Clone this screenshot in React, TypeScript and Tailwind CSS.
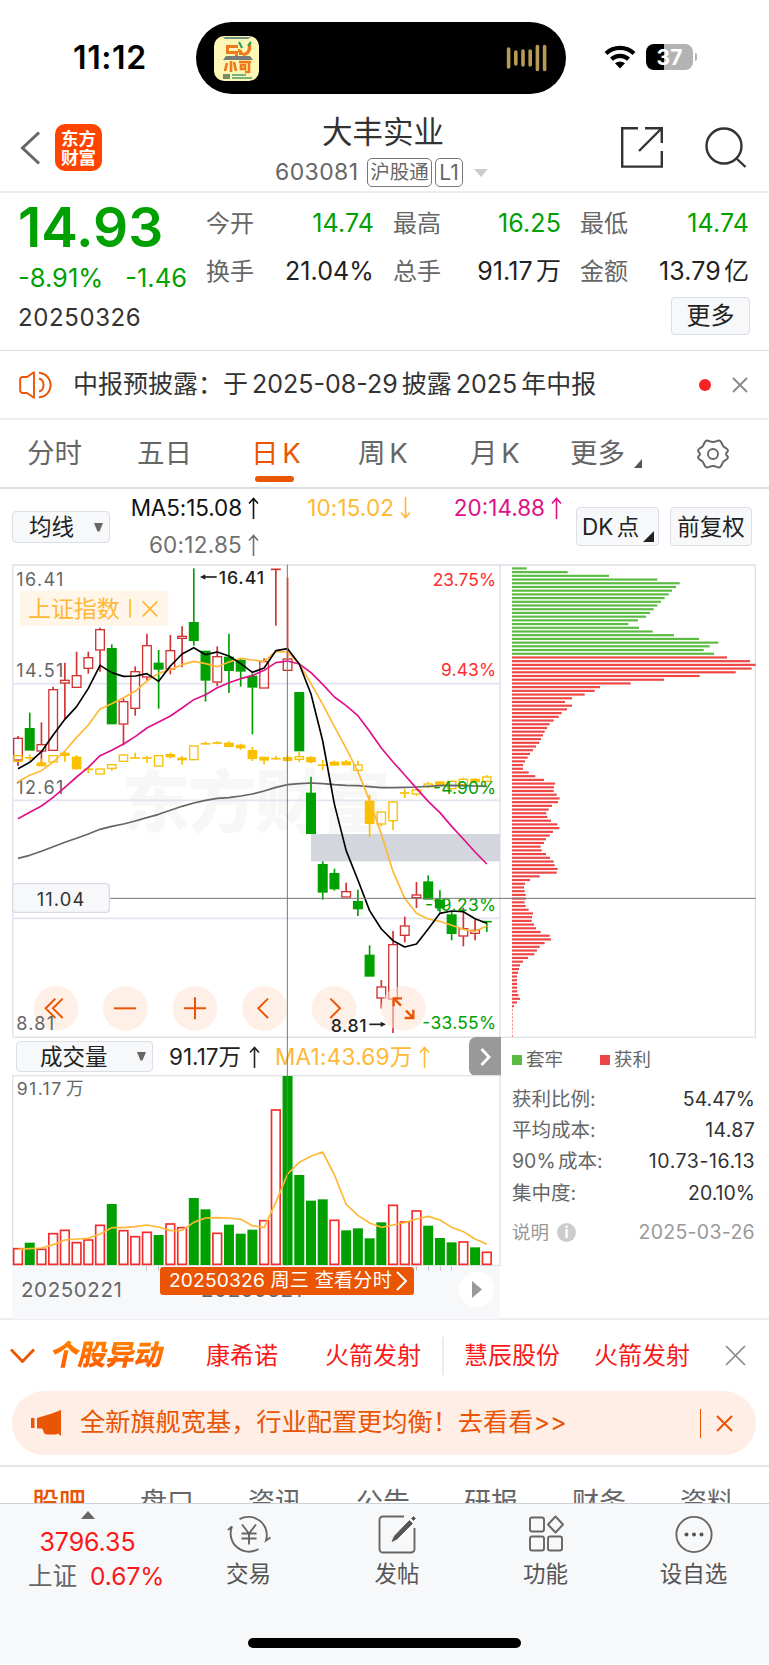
import type { ReactNode } from "react";

type Dir = "up" | "down";
// direction, high, body top, body bottom, low
type Candle = [Dir, number, number, number, number];

const STEP = 35.16;
const cx = (i: number) => 54 + i * STEP;

const candles: Candle[] = [
  ["up", 528, 534, 601, 618],
  ["down", 458, 505, 571, 571],
  ["up", 487, 553, 574, 610],
  ["up", 380, 388, 572, 572],
  ["up", 308, 360, 370, 478],
  ["up", 275, 346, 383, 383],
  ["up", 275, 292, 326, 341],
  ["up", 203, 208, 271, 335],
  ["down", 253, 265, 492, 492],
  ["up", 415, 424, 493, 556],
  ["up", 319, 334, 446, 467],
  ["up", 221, 256, 352, 360],
  ["down", 270, 309, 328, 446],
  ["up", 225, 271, 328, 343],
  ["up", 199, 228, 236, 322],
  ["down", 25, 187, 242, 257],
  ["down", 273, 273, 361, 425],
  ["up", 259, 289, 367, 378],
  ["down", 221, 291, 332, 399],
  ["down", 295, 300, 334, 380],
  ["down", 340, 348, 382, 523],
  ["up", 295, 304, 385, 385],
  ["up", 27, 27, 29, 197],
  ["up", 53, 296, 332, 332],
  ["down", 397, 397, 573, 573],
  ["down", 650, 699, 821, 821],
  ["down", 904, 913, 997, 1019],
  ["down", 926, 940, 987, 992],
  ["up", 968, 994, 1012, 1012],
  ["down", 989, 1024, 1047, 1068],
  ["down", 1156, 1185, 1249, 1249],
  ["up", 1260, 1280, 1315, 1346],
  ["up", 1113, 1153, 1318, 1419],
  ["up", 1070, 1097, 1127, 1147],
  ["up", 966, 1004, 1014, 1044],
  ["down", 946, 965, 1018, 1018],
  ["down", 991, 1020, 1044, 1058],
  ["down", 1055, 1064, 1121, 1141],
  ["up", 1043, 1105, 1129, 1159],
  ["up", 1078, 1110, 1121, 1141],
  ["down", 1083, 1083, 1087, 1116],
];

// Shanghai index overlay; "up" is hollow, "down" is filled
const indexCandles: Candle[] = [
  ["up", 586, 586, 605, 605],
  ["down", 583, 592, 595, 602],
  ["down", 596, 608, 618, 618],
  ["up", 586, 586, 607, 607],
  ["down", 574, 579, 587, 605],
  ["down", 585, 591, 627, 627],
  ["down", 620, 626, 630, 640],
  ["up", 626, 626, 643, 643],
  ["up", 613, 613, 626, 633],
  ["up", 584, 584, 605, 605],
  ["down", 578, 592, 596, 596],
  ["down", 588, 592, 596, 609],
  ["up", 586, 586, 619, 619],
  ["down", 578, 583, 591, 595],
  ["down", 588, 594, 600, 614],
  ["up", 557, 557, 600, 600],
  ["down", 545, 549, 554, 554],
  ["down", 543, 547, 551, 553],
  ["down", 544, 549, 560, 560],
  ["down", 551, 555, 564, 569],
  ["down", 561, 571, 596, 603],
  ["down", 591, 591, 601, 613],
  ["down", 587, 594, 598, 600],
  ["down", 586, 592, 602, 602],
  ["up", 576, 589, 599, 606],
  ["down", 589, 592, 606, 610],
  ["down", 600, 614, 617, 630],
  ["down", 602, 606, 616, 616],
  ["down", 600, 605, 615, 615],
  ["up", 602, 614, 632, 632],
  ["down", 704, 723, 791, 831],
  ["up", 755, 755, 793, 799],
  ["up", 724, 725, 783, 810],
  ["down", 687, 697, 701, 714],
  ["up", 682, 689, 703, 708],
  ["up", 665, 671, 681, 684],
  ["down", 664, 665, 675, 675],
  ["up", 661, 663, 687, 687],
  ["up", 653, 657, 675, 675],
  ["down", 655, 657, 666, 668],
  ["up", 645, 650, 665, 667],
];

const ma5 = [626, 607, 575, 525, 478, 440, 385, 316, 338, 349, 348, 341, 364, 318, 282, 263, 284, 276, 288, 311, 337, 324, 272, 266, 312, 402, 543, 733, 872, 960, 1052, 1107, 1142, 1161, 1152, 1107, 1060, 1053, 1055, 1076, 1090];
const ma10 = [665, 646, 632, 606, 573, 532, 495, 447, 431, 413, 394, 363, 340, 329, 314, 304, 311, 320, 306, 295, 300, 304, 274, 276, 312, 371, 433, 500, 565, 635, 722, 822, 935, 1015, 1060, 1077, 1084, 1096, 1108, 1114, 1098];
const ma20 = [776, 757, 738, 712, 682, 651, 622, 587, 571, 552, 530, 504, 486, 468, 444, 419, 404, 383, 368, 356, 347, 331, 308, 303, 312, 338, 373, 411, 437, 467, 514, 564, 606, 645, 685, 724, 758, 799, 837, 876, 912];
const ma60 = [895, 886, 874, 860, 847, 835, 822, 808, 799, 792, 783, 773, 763, 751, 739, 729, 721, 715, 713, 708, 702, 693, 682, 674, 671, 669, 671, 674, 676, 677, 680, 683, 683, 682, 681, 679, 677, 676, 677, 678, 679];

const volumeTops = [625, 608, 627, 580, 570, 607, 599, 555, 492, 571, 589, 576, 585, 551, 562, 474, 508, 579, 554, 581, 569, 541, 209, 108, 405, 482, 478, 540, 571, 565, 595, 547, 495, 545, 512, 557, 594, 607, 605, 622, 636];
const volumeDown = [1, 8, 12, 15, 16, 18, 19, 20, 23, 24, 25, 26, 28, 29, 30, 31, 35, 36, 37, 39];
const volumeMa = [628, 626, 624, 614, 600, 597, 595, 582, 563, 563, 560, 555, 561, 572, 571, 547, 534, 533, 534, 538, 557, 563, 487, 402, 367, 349, 336, 405, 493, 526, 549, 562, 555, 548, 537, 529, 540, 562, 575, 597, 613];

const TRAPPED = 24;
const chips = [
  65, 188, 312, 457, 524, 513, 501, 491, 479, 468, 457, 446, 435, 423, 399, 370, 402, 443, 507, 582, 640, 614, 596, 627,
  666, 735, 752, 740, 692, 584, 477, 377, 285, 269, 239, 201, 180, 201, 186, 170, 161, 146, 134, 126, 119, 114, 108, 103,
  93, 84, 75, 68, 60, 54, 54, 71, 91, 117, 150, 147, 146, 155, 164, 159, 141, 131, 124, 127, 138, 157, 163, 144, 134, 123,
  117, 107, 110, 123, 135, 146, 149, 158, 155, 104, 75, 60, 57, 59, 62, 63, 59, 62, 71, 84, 81, 80, 87, 93, 107, 134, 138,
  119, 104, 96, 88, 69, 54, 45, 42, 39, 36, 36, 36, 36, 37, 40, 45, 36, 27, 24, 24, 24, 24, 24, 24, 23, 24,
];

const toPoints = (ys: number[]) => ys.map((y, i) => `${cx(i)},${y}`).join(" ");

function CandleMark({ data, index, up, down, body = 26 }: { data: Candle; index: number; up: string; down: string; body?: number }) {
  const [dir, high, top, bottom, low] = data;
  const x = cx(index);
  const color = dir === "up" ? up : down;
  const thin = bottom - top < 6;
  return (
    <g stroke={color} strokeWidth={5}>
      {high < top && <line x1={x} x2={x} y1={high} y2={top} />}
      {low > bottom && <line x1={x} x2={x} y1={bottom} y2={low} />}
      {thin ? (
        <line x1={x - body / 2 - 2} x2={x + body / 2 + 2} y1={(top + bottom) / 2} y2={(top + bottom) / 2} />
      ) : (
        <rect
          x={x - body / 2}
          y={top + 1}
          width={body}
          height={bottom - top - 2}
          strokeWidth={4}
          fill={dir === "up" ? "none" : color}
        />
      )}
    </g>
  );
}

function StatusBar() {
  return (
    <div className="flex h-[104px] items-start">
      <div className="mt-[37px] ml-[73px] w-[123px] text-[32px] leading-[42px] font-semibold tracking-[0.6px] text-black">11:12</div>
      <div className="mt-[22px] flex h-[72px] w-[370px] items-center justify-between rounded-full bg-black pr-[18px] pl-[18px]">
        <svg width="45" height="45" viewBox="0 0 45 45">
          <rect width="45" height="45" rx="10" fill="#fdf7b5" />
          <path d="M9 1h28l-3 2H11z" fill="#6f9186" />
          <path d="M12 9h12v3h-9v3h9v5h-3v-2h-9z" fill="#ee7a1c" />
          <path d="M25 6l4 5M24 13c3 0 5 2 5 6h-4c0-2 0-3-1-3zM37 8c1 6-1 12-8 12l-1-3c5 0 6-3 6-8z" fill="#ee7a1c" />
          <path d="M25 6l3 6M37 6l-3 4" stroke="#2f9e62" strokeWidth="2.2" />
          <path d="M12 20h24l3 4H9z" fill="#777b78" />
          <path d="M17 25v11M13 27l-2 8M20 26l2 9M25 26h12M35 26v10h-4M27 29h4v4h-4z" stroke="#ee7a1c" strokeWidth="2.6" fill="none" />
          <rect x="9" y="38" width="7" height="5" fill="#7b8a62" />
          <path d="M18 39h14M18 42h20" stroke="#4c9a6c" strokeWidth="1.5" />
        </svg>
        <svg width="42" height="30" viewBox="0 0 42 30" stroke="#b59b54" strokeWidth="3.6" strokeLinecap="round">
          <path d="M2.6 6v18M9.8 9v12M17 8v14M24.2 8v14M31.4 3.500v23M38.600 3.500v23" />
        </svg>
      </div>
      <svg className="mt-[45px] ml-[38px]" width="32" height="24" viewBox="0 0 32 24" fill="none" stroke="#000" strokeWidth="4.300">
        <path d="M2 8.500a20 20 0 0 1 28 0" />
        <path d="M7.500 14.200a12.500 12.500 0 0 1 17 0" />
        <path d="M16 23.500l-5-5.200a7.500 7.500 0 0 1 10 0z" fill="#000" stroke="none" />
      </svg>
      <div className="mt-[44px] ml-[10px] flex items-center gap-[2px]">
        <div className="flex h-[26px] w-[47px] items-center justify-center rounded-[8px] bg-linear-to-r from-black from-38% to-[#b3b3b3] to-38% text-[21px] leading-none font-bold text-white">
          37
        </div>
        <div className="h-[8px] w-[2px] rounded-r bg-[#b3b3b3]" />
      </div>
    </div>
  );
}

function Header() {
  return (
    <header className="flex h-[89px] items-start border-b-2 border-[#ededed]">
      <svg className="mt-[27px] ml-[20px]" width="21" height="34" viewBox="0 0 21 34" fill="none" stroke="#666" strokeWidth="3">
        <path d="M19 1.500L2.500 17 19 32.500" />
      </svg>
      <div className="mt-[20px] ml-[14px] flex h-[47px] w-[47px] flex-col items-center justify-center rounded-[10px] bg-[#ff4400] text-[17.500px] leading-[19px] font-bold text-white">
        <span>东方</span>
        <span>财富</span>
      </div>
      <div className="ml-[173px] flex w-[216px] flex-col">
        <div className="mt-[8px] ml-[47px] text-[30.500px] leading-[40px] text-[#333]">大丰实业</div>
        <div className="mt-[6px] flex h-[29px] items-center text-[#666]">
          <span className="w-[92px] text-[23px] tracking-[0.4px]">603081</span>
          <span className="flex h-[29px] w-[65px] items-center justify-center rounded-[5px] border-[1.500px] border-[#777] text-[19.500px]">沪股通</span>
          <span className="ml-[3px] flex h-[29px] w-[28px] items-center justify-center rounded-[5px] border-[1.500px] border-[#777] text-[21px]">L1</span>
          <svg className="ml-[11px]" width="14" height="8" viewBox="0 0 14 8">
            <path d="M0 0h14L7 8z" fill="#ccc" />
          </svg>
        </div>
      </div>
      <svg className="mt-[23px] ml-[130px]" width="42" height="41" viewBox="0 0 42 41" fill="none" stroke="#333" strokeWidth="2.400">
        <path d="M17 1.200H1.200v38.400h39.600V24M24 1.200h16.800V16M40.500 1.500L18 24" />
      </svg>
      <svg className="mt-[23px] ml-[42px]" width="42" height="41" viewBox="0 0 42 41" fill="none" stroke="#333" strokeWidth="2.400">
        <circle cx="19" cy="19" r="17.500" />
        <path d="M31.500 31.500l9 8.500" />
      </svg>
    </header>
  );
}

function Quote({ label, value, green }: { label: string; value: string; green?: boolean }) {
  return (
    <div className="flex items-center justify-between">
      <span className="text-[24px] text-[#666]">{label}</span>
      <span className={`text-[25px] tracking-[0.1px] [word-spacing:-4px] ${green ? "text-[#00a000]" : "text-[#222]"}`}>{value}</span>
    </div>
  );
}

function Summary() {
  return (
    <section className="flex h-[158px] border-b border-[#dddddd] pr-[19px] pl-[18px]">
      <div className="flex w-[188px] flex-col">
        <div className="mt-[4px] text-[55px] leading-[60px] font-semibold text-[#00a000]">14.93</div>
        <div className="mt-[5px] flex justify-between pr-[19px] text-[25.500px] leading-[32px] text-[#00a000]">
          <span>-8.91%</span>
          <span>-1.46</span>
        </div>
        <div className="mt-[8px] text-[24px] leading-[32px] tracking-[0.6px] text-[#333]">20250326</div>
      </div>
      <div className="flex flex-1 flex-col">
        <div className="mt-[7px] grid grid-cols-[168px_168px_169px] gap-x-[19px] text-[24px] leading-[47.500px]">
          <Quote label="今开" value="14.74" green />
          <Quote label="最高" value="16.25" green />
          <Quote label="最低" value="14.74" green />
          <Quote label="换手" value="21.04%" />
          <Quote label="总手" value="91.17 万" />
          <Quote label="金额" value="13.79 亿" />
        </div>
        <button className="mt-[2px] flex h-[38px] w-[79px] items-center justify-center self-end rounded-[4px] border-[1.500px] border-[#dcdfe6] bg-[#f7f8fa] text-[24px] text-[#222]">
          更多
        </button>
      </div>
    </section>
  );
}

function Notice() {
  return (
    <section className="flex h-[69px] items-center border-b-2 border-[#eeeeee] pr-[21px] pl-[19px]">
      <svg width="34" height="28" viewBox="0 0 34 28" fill="none" stroke="#ea5504" strokeWidth="1.900">
        <path d="M1.200 7.500L3 6h5l7-4.800v25.600L8 22H3l-1.800-1.500z" strokeLinejoin="round" />
        <path d="M20 7.500c6 1.500 6 11.500 0 13M20 1.800c15.500 1.500 15.500 23 0 24.500" />
      </svg>
      <p className="ml-[20px] flex-1 text-[25px] [word-spacing:-3px] whitespace-pre text-[#333]">中报预披露：于 2025-08-29 披露 2025 年中报</p>
      <span className="h-[12px] w-[12px] rounded-full bg-[#f92323]" />
      <Cross className="ml-[21px]" size={16} color="#888" width={1.8} />
    </section>
  );
}

function Cross({ size, color, width, className }: { size: number; color: string; width: number; className?: string }) {
  return (
    <svg className={className} width={size} height={size} viewBox={`0 0 ${size} ${size}`} stroke={color} strokeWidth={width}>
      <path d={`M1 1L${size - 1} ${size - 1}M${size - 1} 1L1 ${size - 1}`} />
    </svg>
  );
}

function PeriodTabs() {
  return (
    <nav className="flex h-[69px] items-center border-b-2 border-[#dcdce4] pl-[27px] text-[27.500px] [word-spacing:-4px] text-[#666]">
      <span className="w-[110px]">分时</span>
      <span className="w-[114px]">五日</span>
      <span className="relative w-[107px] text-[#ea5504]">
        日 K
        <i className="absolute top-[43px] left-[4px] h-[6px] w-[39px] rounded-full bg-[#ea5504]" />
      </span>
      <span className="w-[112px]">周 K</span>
      <span className="w-[100px]">月 K</span>
      <span>更多</span>
      <svg className="mt-[20px] ml-[9px]" width="8" height="9" viewBox="0 0 8 9">
        <path d="M8 0v9H0z" fill="#555" />
      </svg>
      <svg className="ml-[55px]" width="32" height="30" viewBox="0 0 32 30" fill="none" stroke="#666" strokeWidth="1.900">
        <path
          d="M10 1.500c2 0 3 1.500 6 1.500s4-1.500 6-1.500c2.500 0 3 4.500 4.500 6S31 9.500 31 11.500c0 1.500-2 2-2 3.500s2 2 2 3.500c0 2-3 2.500-4.500 4s-2 6-4.500 6c-2 0-3-1.500-6-1.500s-4 1.500-6 1.500c-2.500 0-3-4.500-4.500-6S1 20.500 1 18.500C1 17 3 16.500 3 15s-2-2-2-3.500c0-2 3-2.500 4.500-4s2-6 4.500-6z"
          strokeLinejoin="round"
        />
        <circle cx="16" cy="15" r="5" />
      </svg>
    </nav>
  );
}

function MaValue({ text, arrow, className }: { text: string; arrow: "up" | "down"; className: string }) {
  return (
    <span className={`flex items-center justify-end gap-[6px] ${className}`}>
      {text}
      <Arrow dir={arrow} />
    </span>
  );
}

function Arrow({ dir }: { dir: "up" | "down" }) {
  return (
    <svg width="11" height="22" viewBox="0 0 11 22" fill="none" stroke="currentColor" strokeWidth="1.600">
      <path d={dir === "up" ? "M5.500 22V1.500M1 6.500l4.500-5 4.500 5" : "M5.500 0v20.500M1 15.500l4.500 5 4.500-5"} />
    </svg>
  );
}

function Caret({ className }: { className?: string }) {
  return (
    <svg className={className} width="9" height="9" viewBox="0 0 9 9">
      <path d="M0 0h9L5.500 8.500h-2z" fill="#666" />
    </svg>
  );
}

function MaBar() {
  return (
    <div className="flex h-[75px] pl-[12px]">
      <button className="mt-[22px] flex h-[32px] w-[98px] items-center rounded-[4px] border-[1.500px] border-[#dcdfe6] bg-[#f7f8fa] pl-[16px] text-[22.500px] text-[#222]">
        均线
        <Caret className="ml-[20px]" />
      </button>
      <div className="grid w-[452px] grid-cols-[149px_152px_151px] content-start text-[22.500px] leading-[37px]">
        <MaValue text="MA5:15.08" arrow="up" className="tracking-[-0.1px] text-[#111]" />
        <MaValue text="10:15.02" arrow="down" className="tracking-[0.1px] text-[#ffb836]" />
        <MaValue text="20:14.88" arrow="up" className="text-[#dd1188]" />
        <MaValue text="60:12.85" arrow="up" className="tracking-[0.25px] text-[#707070]" />
      </div>
      <button className="relative mt-[18px] ml-[14px] flex h-[39px] w-[83px] items-center rounded-[4px] border-[1.500px] border-[#dcdfe6] bg-[#f7f8fa] pl-[5px] text-[22.500px] [word-spacing:-3px] whitespace-pre text-[#222]">
        DK 点
        <svg className="absolute right-[4px] bottom-[3px]" width="11" height="11" viewBox="0 0 11 11">
          <path d="M11 0v11H0z" fill="#222" />
        </svg>
      </button>
      <button className="mt-[18px] ml-[11px] flex h-[39px] w-[82px] items-center justify-center rounded-[4px] border-[1.500px] border-[#dcdfe6] bg-[#f7f8fa] text-[22.500px] text-[#222]">
        前复权
      </button>
    </div>
  );
}

function RoundButton({ x, children }: { x: number; children: ReactNode }) {
  return (
    <g transform={`translate(${x} 1345)`} fill="none" stroke="#ea5504" strokeWidth={6}>
      <circle r={67} fill="#ffe3d3" fillOpacity={0.55} stroke="none" />
      {children}
    </g>
  );
}

function PriceChart() {
  return (
    <svg className="block" width="489" height="474" viewBox="36 12 1467 1422">
      <g fontFamily="'Noto Sans CJK SC', sans-serif" fontWeight={900} fontSize={205} fill="#f7f7f7">
        <text x={365} y={800} textLength={805}>东方财富</text>
      </g>
      <g stroke="#e1e5ef" strokeWidth={5}>
        <path d="M38 15H1503M38 1432H1503" stroke="#dfe1e8" />
        <path d="M38 371H1500M38 721H1500M38 1075H1500M38 12V1432M1500 12V1432" />
      </g>
      <rect x={933} y={822} width={567} height={82} fill="#d3d6dc" />

      {candles.map((c, i) => (
        <CandleMark key={i} data={c} index={i} up="#d13232" down="#00a000" />
      ))}
      {indexCandles.map((c, i) => (
        <CandleMark key={i} data={c} index={i} up="#f9c000" down="#f9c000" body={25} />
      ))}

      <g fontFamily="Inter, sans-serif" fontSize={54} fill="#666">
        <text x={49} y={78} textLength={141}>16.41</text>
        <text x={49} y={350} textLength={141}>14.51</text>
        <text x={49} y={703} textLength={141}>12.61</text>
      </g>

      <g fill="none" strokeWidth={5} strokeLinejoin="round">
        <polyline points={toPoints(ma60)} stroke="#666" />
        <polyline points={toPoints(ma20)} stroke="#e0108a" />
        <polyline points={toPoints(ma10)} stroke="#ffb836" />
        <polyline points={toPoints(ma5)} stroke="#000" />
      </g>

      <g fontFamily="Inter, sans-serif" fontSize={52} textAnchor="end">
        <text x={1488} y={77} fill="#fb2d2d" textLength={190}>23.75%</text>
        <text x={1488} y={348} fill="#fb2d2d" textLength={165}>9.43%</text>
        <text x={1488} y={702} fill="#00a000" textLength={189}>-4.90%</text>
        <text x={1488} y={1054} fill="#00a000" textLength={213}>-19.23%</text>
        <text x={1488} y={1408} fill="#00a000" textLength={221}>-33.55%</text>
      </g>

      <text x={656} y={72} fontFamily="Inter, sans-serif" fontSize={53} fontWeight={500} fill="#222" textLength={136}>16.41</text>
      <g stroke="#222" strokeWidth={5} fill="#222">
        <path d="M612 51H650" />
        <path d="M600 51l16-8v16z" stroke="none" />
      </g>

      <rect x={60} y={92} width={445} height={106} rx={10} fill="#fff5e8" />
      <text x={84} y={171} fontFamily="'Noto Sans CJK SC', sans-serif" fontSize={69} textLength={275} fill="#ffb836">
        上证指数
      </text>
      <path d="M390 117V173M428 124L472 169M472 124L428 169" stroke="#ffb836" strokeWidth={5} />

      <RoundButton x={168}>
        <path d="M-2-29L-31 0-2 29M20-29L-9 0 20 29" />
      </RoundButton>
      <RoundButton x={376}>
        <path d="M-34 0H32" />
      </RoundButton>
      <RoundButton x={585}>
        <path d="M-33 0H33M0-33V33" />
      </RoundButton>
      <RoundButton x={793}>
        <path d="M11-29L-18 0 11 29" />
      </RoundButton>
      <RoundButton x={1002}>
        <path d="M-11-29L18 0-11 29" />
      </RoundButton>
      <RoundButton x={1210}>
        <path d="M-4-30H-29V-6M-29-30L-7-8M8 7L30 29M4 29H30V4" strokeWidth={7} />
      </RoundButton>
      <text x={49} y={1410} fontFamily="Inter, sans-serif" fontSize={54} textLength={113} fill="#666">8.81</text>
      <text x={992} y={1415} fontFamily="Inter, sans-serif" fontSize={53} fontWeight={500} fill="#222" textLength={108}>8.81</text>
      <g stroke="#222" strokeWidth={5} fill="#222">
        <path d="M1108 1393H1146" />
        <path d="M1158 1393l-16-8v16z" stroke="none" />
      </g>
    </svg>
  );
}

function VolumeHeader() {
  return (
    <div className="flex h-[37px] w-[489px] items-center pl-[4px]">
      <button className="flex h-[31px] w-[137px] items-center rounded-[4px] border-[1.500px] border-[#dcdfe6] bg-[#f7f8fa] pl-[23px] text-[22.500px] text-[#222]">
        成交量
        <Caret className="ml-[29px]" />
      </button>
      <span className="ml-[16px] flex w-[91px] items-center justify-between text-[22.500px] text-[#222]">
        91.17万
        <Arrow dir="up" />
      </span>
      <span className="ml-[15px] flex w-[155px] items-center justify-between text-[22.500px] tracking-[0.25px] text-[#ffb836]">
        MA1:43.69万
        <Arrow dir="up" />
      </span>
      <span className="ml-auto flex h-[39px] w-[32px] items-center justify-center rounded-l-[7px] bg-[#999]">
        <svg width="11" height="18" viewBox="0 0 11 18" fill="none" stroke="#fff" strokeWidth="2.800">
          <path d="M1.500 1l7.500 8-7.500 8" />
        </svg>
      </span>
    </div>
  );
}

function VolumeChart() {
  return (
    <svg className="block" width="489" height="191" viewBox="36 105 1467 573">
      <path d="M38 107H1500V676H38z" fill="none" stroke="#e0e2e8" strokeWidth={4} />
      <text x={50} y={165} fontFamily="Inter, 'Noto Sans CJK SC', sans-serif" fontSize={53} wordSpacing={-9} fill="#666" textLength={201}>
        91.17 万
      </text>
      {volumeTops.map((top, i) =>
        volumeDown.includes(i) ? (
          <rect key={i} x={cx(i) - 15} y={top} width={30} height={675 - top} fill="#00a000" />
        ) : (
          <rect key={i} x={cx(i) - 13} y={top + 1} width={26} height={672 - top} fill="#fff" stroke="#f62c2c" strokeWidth={5} />
        ),
      )}
      <polyline points={toPoints(volumeMa)} fill="none" stroke="#ffb836" strokeWidth={5} strokeLinejoin="round" />
    </svg>
  );
}

function DateStrip() {
  return (
    <div className="relative flex h-[53px] w-[488px] bg-[#f7f8fa] text-[20.500px] leading-[47px] tracking-[0.6px] text-[#666]">
      <span className="ml-[9px] w-[180px]">20250221</span>
      <span>20250321</span>
      <svg className="absolute top-0 left-0" width="488" height="6" viewBox="0 0 488 6" stroke="#c9c9cc">
        <path d="M134.500 0v5M146.500 0v5M404.500 0v5M416.500 0v5M428.500 0v5M439.500 0v5" />
      </svg>
      <div className="absolute top-px left-[148px] flex h-[28px] w-[254px] items-center rounded-[3px] bg-[#ea5504] pl-[9px] text-[19.200px] leading-none tracking-[0.15px] whitespace-pre text-white">
        20250326 周三 查看分时
        <svg className="ml-auto mr-[7px]" width="11" height="20" viewBox="0 0 11 20" fill="none" stroke="#fff" strokeWidth="2">
          <path d="M1 1l9 9-9 9" />
        </svg>
      </div>
      <div className="absolute top-[6px] left-[447px] flex h-[35px] w-[35px] items-center justify-center rounded-full bg-white">
        <svg width="10" height="17" viewBox="0 0 10 17">
          <path d="M0 0l10 8.500L0 17z" fill="#999" />
        </svg>
      </div>
    </div>
  );
}

function ChipChart() {
  return (
    <svg className="block" width="255" height="474" viewBox="-12 12 765 1422">
      <path d="M-12 15H751V1432H-12" fill="none" stroke="#dfe1e8" strokeWidth={4} />
      {chips.map((end, i) => (
        <rect
          key={i}
          x={21}
          y={22 + i * 11.13}
          width={end - 21}
          height={6.5}
          fill={i < TRAPPED ? "#5abb41" : "#ee4646"}
          fillOpacity={end < 26 ? 0.6 : 1}
        />
      ))}
    </svg>
  );
}

function StatRow({ label, value, className = "" }: { label: string; value: string; className?: string }) {
  return (
    <div className="flex justify-between text-[19.500px] leading-[31.200px] [word-spacing:-3px]">
      <span className="text-[#666]">{label}</span>
      <span className={`text-[#333] ${className}`}>{value}</span>
    </div>
  );
}

function ChipStats() {
  return (
    <div className="pl-[11px]">
      <div className="flex h-[43px] items-center text-[18.500px] text-[#666]">
        <i className="h-[10px] w-[10px] bg-[#5abb41]" />
        <span className="ml-[4px] w-[74px]">套牢</span>
        <i className="h-[10px] w-[10px] bg-[#ee4646]" />
        <span className="ml-[4px]">获利</span>
      </div>
      <div className="mt-[3px]">
        <StatRow label="获利比例:" value="54.47%" />
        <StatRow label="平均成本:" value="14.87" className="tracking-[0.3px]" />
        <StatRow label="90% 成本:" value="10.73-16.13" className="tracking-[0.55px]" />
        <StatRow label="集中度:" value="20.10%" />
      </div>
      <div className="mt-[8px] flex items-center text-[19.500px] leading-[31px] text-[#999]">
        <span className="text-[18.500px]">说明</span>
        <i className="ml-[8px] flex h-[19px] w-[19px] items-center justify-center rounded-full bg-[#ccc] text-[15px] leading-none font-bold text-white not-italic">i</i>
        <span className="ml-auto tracking-[0.3px]">2025-03-26</span>
      </div>
    </div>
  );
}

function Charts() {
  return (
    <section className="relative flex h-[756px] border-b-2 border-[#ededf0] pl-[12px]">
      <div className="w-[489px]">
        <PriceChart />
        <VolumeHeader />
        <VolumeChart />
        <DateStrip />
      </div>
      <div className="w-[254px]">
        <ChipChart />
        <ChipStats />
      </div>
      <svg className="absolute top-0 left-0" width="769" height="702" viewBox="0 12 2307 2106">
        <path d="M110 1015H2267M862 14V2116" stroke="#777" strokeWidth={3} />
        <rect x={38} y={971} width={290} height={86} rx={9} fill="#f7f8fa" stroke="#d9dce4" strokeWidth={4} />
        <text x={110} y={1038} fontFamily="Inter, sans-serif" fontSize={55} textLength={143} fill="#333">11.04</text>
      </svg>
    </section>
  );
}

function Movers() {
  return (
    <section className="flex h-[71px] items-center text-[24px] text-[#fa1919]">
      <svg className="ml-[10px]" width="25" height="15" viewBox="0 0 25 15" fill="none" stroke="#ea5504" strokeWidth="2.800">
        <path d="M1 1.500l11.500 12L24 1.500" />
      </svg>
      <span className="ml-[16px] inline-block w-[116px] -skew-x-12 bg-linear-to-b from-[#ff8a00] to-[#ff4a00] bg-clip-text text-[28.500px] font-black tracking-[-0.5px] text-transparent">
        个股异动
      </span>
      <span className="ml-[39px] w-[119px]">康希诺</span>
      <span className="w-[117px]">火箭发射</span>
      <i className="h-[38px] w-[2px] bg-[#ececec]" />
      <span className="ml-[20px] w-[130px]">慧辰股份</span>
      <span>火箭发射</span>
      <Cross className="ml-[35px]" size={21} color="#888" width={1.7} />
    </section>
  );
}

function Banner() {
  return (
    <section className="mr-[13px] ml-[12px] flex h-[64px] items-center rounded-full bg-[#feeee6] pl-[19px] text-[#ea5504]">
      <svg width="30" height="26" viewBox="0 0 30 26" fill="#ea5504">
        <path d="M0 8h3.500v10H0zM6 8l15-4.500L30 0v26l-3-2.500-2 1h-9c-4 0-3-4-5-6H6z" />
      </svg>
      <span className="ml-[19px] text-[25.200px]">全新旗舰宽基，行业配置更均衡！去看看&gt;&gt;</span>
      <i className="ml-auto h-[29px] w-[1.500px] bg-[#ea5504]" />
      <Cross className="mr-[23px] ml-[15px]" size={17} color="#ea5504" width={2} />
    </section>
  );
}

function InfoTabs() {
  const tabs = ["盘口", "资讯", "公告", "研报", "财务", "资料"];
  return (
    <nav className="mt-[10px] h-[38px] overflow-hidden border-t-2 border-[#e4e4e6]">
      <div className="flex justify-between pr-[35px] pl-[32px] pt-[16px] text-[27px] leading-[40px] text-[#666]">
        <span className="font-medium text-[#ea5504]">股吧</span>
        {tabs.map((t) => (
          <span key={t}>{t}</span>
        ))}
      </div>
    </nav>
  );
}

function NavItem({ label, className, children }: { label: string; className: string; children: ReactNode }) {
  return (
    <div className={`flex flex-col items-center pt-[10px] ${className}`}>
      <svg width="44" height="40" viewBox="0 0 44 40" fill="none" stroke="#666" strokeWidth="1.900">
        {children}
      </svg>
      <span className="mt-[3px] text-[22.500px] leading-[34px] text-[#555]">{label}</span>
    </div>
  );
}

function BottomBar() {
  return (
    <footer className="flex h-[161px] flex-col justify-between border-t-[1.500px] border-[#cfd0d4] bg-[#f7f8fa]">
      <div className="flex">
        <div className="flex w-[175px] flex-col items-center pt-[7px]">
          <svg width="14" height="8" viewBox="0 0 14 8">
            <path d="M7 0l7 8H0z" fill="#666" />
          </svg>
          <div className="mt-[6px] text-[25px] leading-[34px] tracking-[-0.1px] text-[#fa1919]">3796.35</div>
          <div className="flex w-[175px] gap-[13px] pl-[28px] text-[24.500px] leading-[34px]">
            <span className="text-[#666]">上证</span>
            <span className="text-[#fa1919]">0.67%</span>
          </div>
        </div>
        <NavItem label="交易" className="w-[147px]">
          <path d="M12.500 5.200A18.300 18.300 0 0 1 39 26.500l4.500-3M31.500 35A18.300 18.300 0 0 1 5 12.500L1 16M15 10.500l7 9 7-9M14.500 19.500h15M14.500 24.500h15M22 19.500v11" />
        </NavItem>
        <NavItem label="发帖" className="w-[150px]">
          <path d="M29 2.500H8a3.500 3.500 0 0 0-3.500 3.500v29A3.500 3.500 0 0 0 8 38.500h28a3.500 3.500 0 0 0 3.500-3.500V14" />
          <path d="M34.500 6.500l3 3-15.500 15.500-5 2.500 2.500-5.500zM36.500 4.500l2-2 2 2-2 2z" fill="#555" strokeWidth="1" />
        </NavItem>
        <NavItem label="功能" className="w-[147px]">
          <rect x="6" y="3.500" width="14" height="14" rx="2" />
          <rect x="6" y="22.500" width="14" height="14" rx="2" />
          <rect x="24" y="22.500" width="14" height="14" rx="2" />
          <path d="M31.500 2.500l7.500 8-7.500 8-7.500-8z" strokeLinejoin="round" />
        </NavItem>
        <NavItem label="设自选" className="w-[149px]">
          <circle cx="22" cy="20.500" r="17.600" />
          <g fill="#555" stroke="none">
            <circle cx="14.500" cy="20.500" r="2" />
            <circle cx="22" cy="20.500" r="2" />
            <circle cx="29.500" cy="20.500" r="2" />
          </g>
        </NavItem>
      </div>
      <div className="mb-[16px] ml-[248px] h-[10px] w-[273px] rounded-full bg-black" />
    </footer>
  );
}

export default function App() {
  return (
    <div className="h-[1665px] w-[769px] overflow-hidden bg-white font-['Inter','Noto_Sans_CJK_SC',sans-serif] whitespace-nowrap">
      <StatusBar />
      <Header />
      <Summary />
      <Notice />
      <PeriodTabs />
      <MaBar />
      <Charts />
      <Movers />
      <Banner />
      <InfoTabs />
      <BottomBar />
    </div>
  );
}
